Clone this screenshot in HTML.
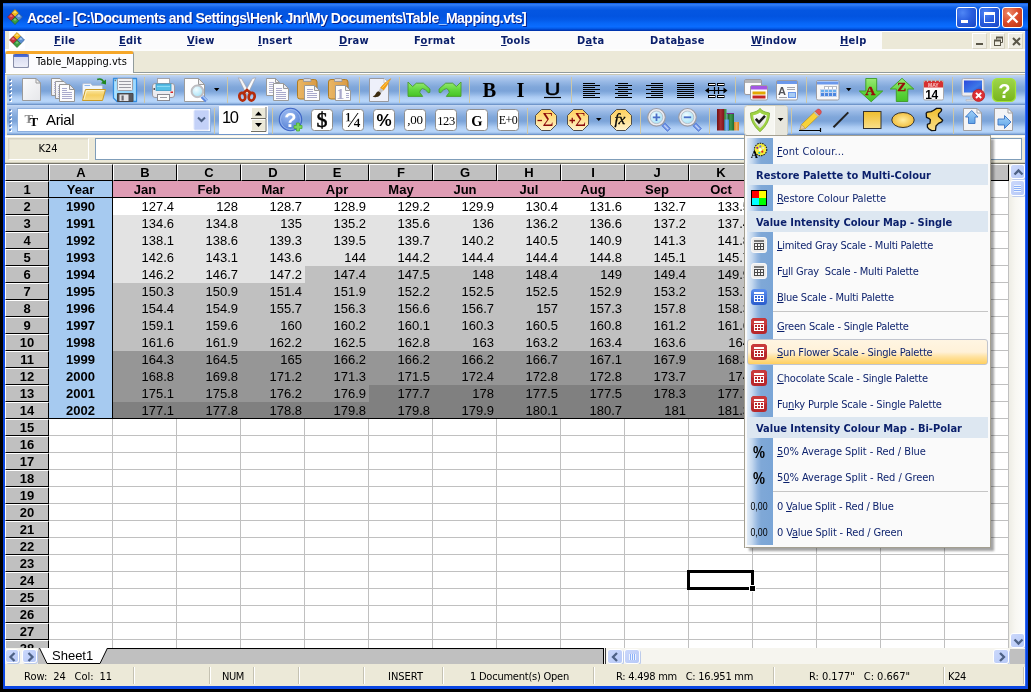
<!DOCTYPE html>
<html><head><meta charset="utf-8"><title>Accel</title>
<style>
html,body{margin:0;padding:0;background:#000;}
body{width:1031px;height:692px;overflow:hidden;}
#scr{will-change:transform;position:relative;width:1031px;height:692px;background:#000;overflow:hidden;font-family:"DejaVu Sans Condensed","Liberation Sans",sans-serif;font-size:11px;color:#000;}
.a{position:absolute;}
.ui{font-family:"DejaVu Sans Condensed","Liberation Sans",sans-serif;font-size:11px;white-space:nowrap;}
.ar{font-family:"Liberation Sans",sans-serif;white-space:nowrap;}
u{text-decoration:underline;text-underline-offset:1px;}
#win{left:3px;top:3px;width:1025px;height:686px;background:#0a46e2;}
#client{left:5px;top:31px;width:1020px;height:655px;background:#ece9d8;}
#title{left:3px;top:3px;width:1025px;height:28px;background:linear-gradient(#0a58e2 0%,#3580f6 6%,#1665ea 14%,#0456e1 26%,#0254e0 48%,#045ae8 60%,#0766f6 72%,#0a6cff 84%,#0660ee 90%,#0040c6 96%,#002e9e 100%);}
#ttext{left:27px;top:10px;font:bold 14px "Liberation Sans",sans-serif;color:#fff;text-shadow:1px 1px 0 #0a1f8a;white-space:nowrap;letter-spacing:-.52px;}
.mi{top:34px;font-weight:bold;color:#0a1f6b;letter-spacing:.25px;}
.cb{top:7px;width:19px;height:19px;border:1px solid #fff;border-radius:3px;background:radial-gradient(circle at 30% 25%,#4f86f5 0%,#2a5fe0 45%,#1a47c4 100%);}
.cx{background:radial-gradient(circle at 30% 25%,#ee8a6a 0%,#d9492a 50%,#b9340f 100%);}
.mb{top:33px;width:15px;height:16px;background:#efede2;border:1px solid #fff;border-right-color:#d8d4c4;border-bottom-color:#d8d4c4;box-sizing:border-box;}
#dtab{left:5px;top:51px;width:129px;height:22px;box-sizing:border-box;background:#fcfcfe;border-top:3px solid #f5a72a;border-right:1px solid #919b9c;border-left:1px solid #919b9c;border-radius:3px 3px 0 0;}
#grid{background:#fff;overflow:hidden;}
.gv{top:0;width:1px;height:484px;background:#c0c0c0;}
.gh{left:0;width:1004px;height:1px;background:#c0c0c0;}
.hd{box-sizing:border-box;background:#c0c0c0;border-top:1px solid #fff;border-left:1px solid #fff;border-right:1px solid #000;border-bottom:1px solid #000;font-size:13px;line-height:16px;text-align:center;font-weight:bold;}
.rh{font-weight:bold;}
.cb1{font-size:13px;font-weight:bold;line-height:17px;height:17px;text-align:center;}
.cn{font-size:13px;line-height:17px;height:17px;text-align:right;}
.sbb{box-sizing:border-box;background:linear-gradient(135deg,#cbd8fb,#b7c9f7);border:1px solid #fff;border-radius:3px;box-shadow:1px 1px 0 rgba(140,168,232,.55);}
.ss{top:667px;width:2px;height:17px;background:linear-gradient(90deg,#c5c2b2 0,#c5c2b2 1px,#fff 1px,#fff 2px);}
#popup{left:745px;top:135px;width:246px;height:413px;box-sizing:border-box;border:1px solid #a39f91;border-left-color:#fafafa;background:#fafafa;overflow:hidden;}
#pshadow{left:749px;top:139px;width:245px;height:412px;background:rgba(0,0,0,.36);filter:blur(1.3px);}
.pstrip{left:1px;width:26px;background:linear-gradient(90deg,#e2edf8 0%,#c3d7ee 20%,#95b7e0 40%,#7fa8d7 54%,#7aa5d6 100%);}
.pit{left:31px;height:26px;line-height:26px;color:#0a1f6b;white-space:pre;}
.phd{left:1px;width:241px;height:21px;background:#dde7f1;}
.phdt{left:10px;height:21px;line-height:21px;font-weight:bold;color:#0a1f6b;white-space:pre;}
.psep{left:27px;width:215px;height:1px;background:#c5c5c5;}
.psel{left:1px;width:241px;height:26px;box-sizing:border-box;border:1px solid #c2c5ce;border-radius:3px;background:linear-gradient(#fff5e2 0%,#fff1d8 50%,#ffe2a0 70%,#ffd060 100%);}
.tb{left:7px;width:1018px;background:linear-gradient(#c7daf5 0%,#b3cbee 7%,#97b8e5 23%,#80a7da 40%,#7ba3d8 53%,#8fb4e4 63%,#aac9f1 73%,#b7d5f9 83%,#b4d3f8 90%,#9fc1eb 93.3%,#85a9da 96.6%,#6d94c9 98.5%,#6d94c9 100%);}
.tb2{}
.grip{width:3px;height:23px;background:
 repeating-linear-gradient(#5f83bd 0,#5f83bd 2px,transparent 2px,transparent 4px);}
.grip2{width:3px;height:23px;background:
 repeating-linear-gradient(transparent 0,transparent 1px,#fff 1px,#fff 3px,transparent 3px,transparent 4px);}
.tsep{width:1px;height:26px;background:#cdc7a6;margin-top:1px;}
.ic{overflow:visible;}

</style></head>
<body>
<div id="scr">
<!-- chrome.html -->
<div class="a" id="win"></div>
<div class="a" id="title"></div>
<svg class="a" style="left:7px;top:9px" width="16" height="16" viewBox="0 0 16 16">
 <polygon points="8,0.5 11.7,4.2 8,7.9 4.3,4.2" fill="#f2b818" stroke="#b07a08" stroke-width=".6"/>
 <polygon points="4.2,4.3 7.9,8 4.2,11.7 0.5,8" fill="#c8303a" stroke="#7c1820" stroke-width=".6"/>
 <polygon points="11.8,4.3 15.5,8 11.8,11.7 8.1,8" fill="#5a8fd0" stroke="#2a5390" stroke-width=".6"/>
 <polygon points="8,8.1 11.7,11.8 8,15.5 4.3,11.8" fill="#3c9c40" stroke="#1c5c20" stroke-width=".6"/>
 <polygon points="8,1.5 10,3.6 8,4.4 6,3.6" fill="#ffe27a" opacity=".8"/>
 <polygon points="4.2,5.4 6,7.2 4.2,8 2.3,7.2" fill="#ef8a90" opacity=".7"/>
 <polygon points="11.8,5.4 13.7,7.2 11.8,8 10,7.2" fill="#b4d2f4" opacity=".8"/>
 <polygon points="8,9.2 9.8,11 8,11.8 6.2,11" fill="#8fd890" opacity=".7"/>
</svg>
<div class="a" id="ttext">Accel - [C:\Documents and Settings\Henk Jnr\My Documents\Table_Mapping.vts]</div>
<!-- caption buttons -->
<div class="a cb" style="left:956px;"><div class="a" style="left:4px;top:12px;width:7px;height:3px;background:#fff"></div></div>
<div class="a cb" style="left:979px;"><div class="a" style="left:4px;top:4px;width:11px;height:11px;border:1px solid #fff;border-top-width:3px;box-sizing:border-box"></div></div>
<div class="a cb cx" style="left:1002px;"><svg class="a" style="left:0;top:0" width="19" height="19" viewBox="0 0 19 19"><path d="M4.5 4.5L14.5 14.5M14.500 4.5L4.5 14.5" stroke="#fff" stroke-width="2.3" stroke-linecap="butt"/></svg></div>
<div class="a" id="client"></div>
<!-- menu bar -->
<div class="a" style="left:9px;top:31px;width:873px;height:20px;background:#fbfbfc"></div>
<div class="a" style="left:9px;top:31px;width:16px;height:19px;background:#fff"></div>
<div class="a" style="left:882px;top:31px;width:143px;height:1px;background:#fff"></div>
<div class="a" style="left:5px;top:49px;width:1020px;height:2px;background:#fdfdfc"></div>
<svg class="a" style="left:9px;top:32px" width="16" height="16" viewBox="0 0 16 16">
 <polygon points="8,0.5 11.7,4.2 8,7.9 4.3,4.2" fill="#f2b818" stroke="#b07a08" stroke-width=".6"/>
 <polygon points="4.2,4.3 7.9,8 4.2,11.7 0.5,8" fill="#c8303a" stroke="#7c1820" stroke-width=".6"/>
 <polygon points="11.8,4.3 15.5,8 11.8,11.7 8.1,8" fill="#5a8fd0" stroke="#2a5390" stroke-width=".6"/>
 <polygon points="8,8.1 11.7,11.8 8,15.5 4.3,11.8" fill="#3c9c40" stroke="#1c5c20" stroke-width=".6"/>
 <polygon points="8,1.5 10,3.6 8,4.4 6,3.6" fill="#ffe27a" opacity=".8"/>
 <polygon points="4.2,5.4 6,7.2 4.2,8 2.3,7.2" fill="#ef8a90" opacity=".7"/>
 <polygon points="11.8,5.4 13.7,7.2 11.8,8 10,7.2" fill="#b4d2f4" opacity=".8"/>
 <polygon points="8,9.2 9.8,11 8,11.8 6.2,11" fill="#8fd890" opacity=".7"/>
</svg>
<div class="a ui mi" style="left:54px"><u>F</u>ile</div>
<div class="a ui mi" style="left:119px"><u>E</u>dit</div>
<div class="a ui mi" style="left:187px"><u>V</u>iew</div>
<div class="a ui mi" style="left:258px"><u>I</u>nsert</div>
<div class="a ui mi" style="left:339px"><u>D</u>raw</div>
<div class="a ui mi" style="left:414px">F<u>o</u>rmat</div>
<div class="a ui mi" style="left:501px"><u>T</u>ools</div>
<div class="a ui mi" style="left:577px">D<u>a</u>ta</div>
<div class="a ui mi" style="left:650px">Data<u>b</u>ase</div>
<div class="a ui mi" style="left:751px"><u>W</u>indow</div>
<div class="a ui mi" style="left:840px"><u>H</u>elp</div>
<!-- mdi buttons -->
<div class="a mb" style="left:972px"><div class="a" style="left:3px;top:9px;width:7px;height:2px;background:#5a5648"></div></div>
<div class="a mb" style="left:990px"><svg class="a" style="left:0;top:0" width="15" height="15" viewBox="0 0 15 15"><path d="M5.5 5.5V3.5H11.5V8.5H9.5" fill="none" stroke="#5a5648" stroke-width="1"/><path d="M5 3.5H12" stroke="#5a5648" stroke-width="2"/><rect x="3.5" y="6.5" width="6" height="5" fill="none" stroke="#5a5648" stroke-width="1"/><path d="M3 6.5H10" stroke="#5a5648" stroke-width="2"/></svg></div>
<div class="a mb" style="left:1008px"><svg class="a" style="left:0;top:0" width="15" height="15" viewBox="0 0 15 15"><path d="M4 4L11 11M11 4L4 11" stroke="#5a5648" stroke-width="2"/></svg></div>
<!-- document tab bar -->
<div class="a" style="left:134px;top:72px;width:891px;height:1px;background:#919b9c"></div>
<div class="a" style="left:5px;top:73px;width:1020px;height:1px;background:#fff"></div>
<div class="a" style="left:5px;top:74px;width:1020px;height:1px;background:#cbc8b3"></div>
<div class="a" id="dtab"></div>
<div class="a" style="left:13px;top:54px;width:16px;height:14px;border-radius:2px;background:linear-gradient(#3c5cc6 0,#5474da 3.3px,#d9ddf1 3.3px,#eff0fa 100%);box-shadow:inset 1px 0 0 rgba(125,132,160,.9),inset -1px 0 0 rgba(125,132,160,.9),inset 0 -1px 0 rgba(125,132,160,.9)"></div>
<div class="a ui" style="left:36px;top:55px;">Table_Mapping.vts</div>
<!-- formula bar -->
<div class="a" style="left:5px;top:135px;width:1020px;height:29px;background:#ece9d8"></div>
<div class="a" style="left:5px;top:135px;width:1020px;height:3px;background:linear-gradient(#f6f3e6 0,#f6f3e6 1px,#fff 1px,#fff 2px,#f4f1e3 2px,#f4f1e3 3px)"></div>
<div class="a" style="left:8px;top:138px;width:81px;height:22px;box-sizing:border-box;border:1px solid #d6d2c2;border-right-color:#fff;border-bottom-color:#fff;box-shadow:inset 1px 1px 0 #e2dfd0;"></div>
<div class="a ui" style="left:8px;top:142px;width:80px;text-align:center">K24</div>
<div class="a" style="left:95px;top:138px;width:927px;height:22px;box-sizing:border-box;border:1px solid #7f9db9;background:#fff"></div>

<div class="a" style="left:5px;top:162px;width:1020px;height:1px;background:#cfccba"></div>
<div class="a" style="left:5px;top:163px;width:1020px;height:1px;background:#77756a"></div>

<!-- toolbar1.html -->
<div class="a tb" style="top:75px;height:30px"></div>
<div class="a tb tb2" style="top:105px;height:30px"></div>
<div class="a grip2" style="left:10px;top:79px;width:2px"></div><div class="a grip" style="left:9px;top:79px;width:2px"></div>
<div class="a grip2" style="left:10px;top:109px;width:2px"></div><div class="a grip" style="left:9px;top:109px;width:2px"></div>
<div class="a tsep" style="left:144px;top:76px"></div><div class="a tsep" style="left:227px;top:76px"></div><div class="a tsep" style="left:359px;top:76px"></div><div class="a tsep" style="left:399px;top:76px"></div><div class="a tsep" style="left:469px;top:76px"></div><div class="a tsep" style="left:571px;top:76px"></div><div class="a tsep" style="left:735px;top:76px"></div><div class="a tsep" style="left:806px;top:76px"></div><div class="a tsep" style="left:952px;top:76px"></div><div class="a tsep" style="left:214px;top:107px;height:26px"></div><div class="a tsep" style="left:272px;top:107px;height:26px"></div><div class="a tsep" style="left:527px;top:107px;height:26px"></div><div class="a tsep" style="left:640px;top:107px;height:26px"></div><div class="a tsep" style="left:709px;top:107px;height:26px"></div><div class="a tsep" style="left:791px;top:107px;height:26px"></div><div class="a tsep" style="left:953px;top:107px;height:26px"></div>

<!-- toolbar2.html -->
<svg class="a" style="left:0;top:74px" width="1031" height="62" viewBox="0 74 1031 62">
<defs>
<linearGradient id="gPaper" x1="0" y1="0" x2="1" y2="1"><stop offset="0" stop-color="#fbfbfc"/><stop offset="1" stop-color="#e6e7ea"/></linearGradient>
<linearGradient id="gFold" x1="0" y1="0" x2="0" y2="1"><stop offset="0" stop-color="#fbe9a8"/><stop offset=".5" stop-color="#f5cf62"/><stop offset="1" stop-color="#f9dc86"/></linearGradient>
<linearGradient id="gGreen" x1="0" y1="0" x2="0" y2="1"><stop offset="0" stop-color="#9aea74"/><stop offset=".55" stop-color="#5fd63e"/><stop offset="1" stop-color="#46c426"/></linearGradient>
<linearGradient id="gClip" x1="0" y1="0" x2="1" y2="0"><stop offset="0" stop-color="#eab766"/><stop offset="1" stop-color="#d99a45"/></linearGradient>
<linearGradient id="gOct" x1="0" y1="0" x2="0" y2="1"><stop offset="0" stop-color="#ffcf5c"/><stop offset=".45" stop-color="#ffe08c"/><stop offset="1" stop-color="#fff3cf"/></linearGradient>
<linearGradient id="gSq" x1="0" y1="0" x2="0" y2="1"><stop offset="0" stop-color="#efbe2e"/><stop offset="1" stop-color="#f9df8a"/></linearGradient>
<radialGradient id="gEl" cx=".5" cy=".5" r=".6"><stop offset="0" stop-color="#ffeea0"/><stop offset="1" stop-color="#efb52c"/></radialGradient>
<radialGradient id="gLens" cx=".4" cy=".35" r=".7"><stop offset="0" stop-color="#f2fcff"/><stop offset="1" stop-color="#a4e2f8"/></radialGradient>
<radialGradient id="gHelp" cx=".4" cy=".3" r=".85"><stop offset="0" stop-color="#9bbaf2"/><stop offset=".6" stop-color="#6890dc"/><stop offset="1" stop-color="#4a74cc"/></radialGradient>
<linearGradient id="gHelpG" x1="0" y1="0" x2="0" y2="1"><stop offset="0" stop-color="#9ed64c"/><stop offset="1" stop-color="#78b41c"/></linearGradient>
<linearGradient id="gMon" x1="0" y1="0" x2="1" y2="1"><stop offset="0" stop-color="#2c49dc"/><stop offset=".6" stop-color="#3d78e8"/><stop offset="1" stop-color="#2040c8"/></linearGradient>
<linearGradient id="gShield" x1="0" y1="0" x2="0" y2="1"><stop offset="0" stop-color="#ffffff"/><stop offset="1" stop-color="#dcdcdc"/></linearGradient>
<linearGradient id="gBlueArr" x1="0" y1="0" x2="0" y2="1"><stop offset="0" stop-color="#9fd0f8"/><stop offset="1" stop-color="#5fa2e6"/></linearGradient>
<linearGradient id="gSave" x1="0" y1="0" x2="1" y2="0"><stop offset="0" stop-color="#c4ecff"/><stop offset=".15" stop-color="#9adcff"/><stop offset=".85" stop-color="#8ed2fd"/><stop offset="1" stop-color="#b8e6ff"/></linearGradient>
<linearGradient id="gRedBar" x1="0" y1="0" x2="1" y2="0"><stop offset="0" stop-color="#701014"/><stop offset=".5" stop-color="#a62c32"/><stop offset="1" stop-color="#7c1418"/></linearGradient>
<linearGradient id="gGrnBar" x1="0" y1="0" x2="1" y2="0"><stop offset="0" stop-color="#1c5c28"/><stop offset=".5" stop-color="#3f9850"/><stop offset="1" stop-color="#1f6a2e"/></linearGradient>
<linearGradient id="gBluBar" x1="0" y1="0" x2="1" y2="0"><stop offset="0" stop-color="#3a7ed0"/><stop offset=".5" stop-color="#7ab4ec"/><stop offset="1" stop-color="#3a7ed0"/></linearGradient>
<linearGradient id="gOrgBar" x1="0" y1="0" x2="1" y2="0"><stop offset="0" stop-color="#d8822a"/><stop offset=".5" stop-color="#f0ac5a"/><stop offset="1" stop-color="#d8822a"/></linearGradient>
</defs>
<!-- new -->
<path d="M22.5 78.5H36L40.5 83V100.5H22.5Z" fill="url(#gPaper)" stroke="#9a9a9a"/>
<path d="M36 78.5V83H40.5Z" fill="#f4f4f6" stroke="#9a9a9a" stroke-linejoin="round"/>
<!-- multi docs -->
<path d="M51.500 78.500H60L62.500 81V95.500H51.500Z" fill="url(#gPaper)" stroke="#959595"/>
<path d="M55.500 81.500H64L66.500 84V98.500H55.500Z" fill="url(#gPaper)" stroke="#959595"/>
<path d="M54 82.500h1.500M54 84.500h1.500M54 86.500h1.500M54 88.500h1.500M54 90.500h1.500M54 92.500h1.500M58 86.500h1.500M58 88.500h1.500M58 90.500h1.500M58 92.500h1.500M58 94.500h1.500M58 96.500h1.500" stroke="#b4b4d8" stroke-width="1"/>
<path d="M59.500 84.500H69.500L74.500 89.500V101.500H59.500Z" fill="#fcfcfd" stroke="#959595"/>
<path d="M69.500 84.500V89.500H74.500Z" fill="#ececf0" stroke="#959595" stroke-linejoin="round"/>
<path d="M62 88.500h5M62 90.500h5M62 92.500h10M62 94.500h10M62 96.500h10M62 98.500h10" stroke="#a9a9cc" stroke-width="1"/>
<!-- open folder -->
<path d="M82.500 98V84.800Q82.500 83.500 84 83.500H90.500L92.500 85.500H101.500Q102.500 85.500 102.500 87V92" fill="#f0f5fc" stroke="#b4c0d6"/>
<path d="M84.500 85.500H90" stroke="#8ab4ee" stroke-width="1"/>
<path d="M82.500 100.500L85.500 89.500H105.500L102.500 100.500Z" fill="url(#gFold)" stroke="#c89a28" stroke-linejoin="round"/>
<path d="M84 99.500L86.500 90.500H104" fill="none" stroke="#fdf2c4" stroke-width="1"/>
<path d="M97.200 79.500Q101.500 77.800 103.800 82" fill="none" stroke="#1e861e" stroke-width="1.600"/>
<path d="M100.800 83.200L106 79.500V84.500Z" fill="#1e861e"/>
<!-- save -->
<path d="M113.500 78.500H136.500V101.500H117L113.500 98Z" fill="url(#gSave)" stroke="#348ce0" stroke-width="1.300" stroke-linejoin="round"/>
<rect x="114.700" y="79.700" width="1" height="1.500" fill="#3a4a5a"/>
<rect x="117.500" y="78.500" width="15" height="12" rx="1" fill="#f2f2f4" stroke="#a0a0a8"/>
<path d="M119 81.500h12M119 84.500h12M119 87.500h12" stroke="#9a9aa2" stroke-width="1.100"/>
<path d="M117.500 93.500H133V101.500H117.500Z" fill="#58585c" stroke="#48484c"/>
<rect x="119.500" y="94.500" width="9" height="6.500" fill="#e4e4e8"/>
<rect x="121.500" y="95.500" width="2.200" height="5" fill="#6a6a70"/>
<!-- print -->
<rect x="157.500" y="78.500" width="12" height="7" fill="#fcfcfc" stroke="#a4a4aa"/>
<rect x="152.500" y="83.500" width="22" height="14" rx="2.500" fill="#ebebf0" stroke="#9a9aa2"/>
<rect x="156" y="84" width="15" height="6.500" fill="#56bfe6" stroke="#3a9ac8" stroke-width=".8"/>
<path d="M157 86.500h13" stroke="#8ad8f4" stroke-width="1"/>
<rect x="170.500" y="91.500" width="2.500" height="1.500" fill="#d82020"/>
<rect x="153.500" y="88" width="1.500" height="2" fill="#55555a"/>
<rect x="157.500" y="94.500" width="12" height="6" fill="#fbfbfb" stroke="#8a8a92"/>
<path d="M160 97.500h7" stroke="#9a9aa2" stroke-width="1"/>
<!-- preview -->
<path d="M184.500 78.500H198.500L204.500 84.500V101.500H184.500Z" fill="#fdfdfe" stroke="#9c9c9c"/>
<path d="M198.500 78.500V84.500H204.500Z" fill="#ececf0" stroke="#9c9c9c" stroke-linejoin="round"/>
<path d="M202 96.500L206.500 101" stroke="#5a86dc" stroke-width="3.800" stroke-linecap="butt"/>
<path d="M202.300 95.800L207 100.500" stroke="#a4c4f6" stroke-width="1.300"/>
<circle cx="197.400" cy="91.300" r="5.600" fill="url(#gLens)" stroke="#c2c2c6" stroke-width="1.700"/>
<circle cx="197.400" cy="91.300" r="6.400" fill="none" stroke="#a4a4aa" stroke-width=".5"/>
<path d="M214 88H219.400L216.700 91.200Z" fill="#000"/>
<!-- cut -->
<path d="M238.300 77.800L241.600 78.600L249.200 92.300L246.200 94Z" fill="#f4f4f6" stroke="#a2a2aa" stroke-width=".7"/>
<path d="M255.700 77.800L252.400 78.600L244.800 92.300L247.800 94Z" fill="#fcfcfd" stroke="#a2a2aa" stroke-width=".7"/>
<ellipse cx="242.300" cy="96.700" rx="2.900" ry="3.900" fill="none" stroke="#b52c0a" stroke-width="2.700" transform="rotate(-12 242.300 96.700)"/>
<ellipse cx="251.700" cy="96.700" rx="2.900" ry="3.900" fill="none" stroke="#b52c0a" stroke-width="2.700" transform="rotate(12 251.700 96.700)"/>
<path d="M243.500 93L247 90L250.500 93" fill="none" stroke="#b52c0a" stroke-width="2.600"/>
<!-- copy -->
<path d="M266.500 78.500H275.500L279.500 82.500V95.500H266.500Z" fill="#fcfcfd" stroke="#9a9a9a"/>
<path d="M275.500 78.500V82.500H279.500Z" fill="#ececf0" stroke="#9a9a9a" stroke-linejoin="round"/>
<path d="M269 82.500h5M269 84.500h5M269 86.500h4M269 88.500h4M269 90.500h4M269 92.500h4" stroke="#b4b4d2"/>
<path d="M273.500 83.500H283.500L288.500 88.500V100.500H273.500Z" fill="#fcfcfd" stroke="#9a9a9a"/>
<path d="M283.500 83.500V88.500H288.500Z" fill="#ececf0" stroke="#9a9a9a" stroke-linejoin="round"/>
<path d="M276 88.500h6M276 90.500h6M276 92.500h10M276 94.500h10M276 96.500h10M276 98.500h10" stroke="#a9a9cc"/>
<!-- paste -->
<rect x="297.500" y="79.500" width="19.500" height="19.500" rx="2.500" fill="url(#gClip)" stroke="#b07c22"/>
<path d="M303.500 81.500V79.500Q303.500 78.500 305 78.500H309.500Q311 78.500 311 79.500V81.500Z" fill="#d8d8dc" stroke="#909098" stroke-width=".8"/>
<path d="M304.500 85.500H314.500L319.500 90.500V100.500H304.500Z" fill="#fcfcfd" stroke="#9a9a9a"/>
<path d="M314.500 85.500V90.500H319.500Z" fill="#ececf0" stroke="#9a9a9a" stroke-linejoin="round"/>
<path d="M307 89.500h6M307 91.500h6M307 93.500h10M307 95.500h10M307 97.500h10" stroke="#a9a9cc"/>
<!-- paste special -->
<rect x="328.500" y="79.500" width="19.500" height="19.500" rx="2.500" fill="url(#gClip)" stroke="#b07c22"/>
<path d="M334.500 81.500V79.500Q334.500 78.500 336 78.500H340.500Q342 78.500 342 79.500V81.500Z" fill="#d8d8dc" stroke="#909098" stroke-width=".8"/>
<path d="M335.500 85.500H345.500L350.500 90.500V100.500H335.500Z" fill="#fcfcfd" stroke="#9a9a9a"/>
<path d="M345.500 85.500V90.500H350.500Z" fill="#ececf0" stroke="#9a9a9a" stroke-linejoin="round"/>
<path d="M346 93.500h3M346 95.500h3M346 97.500h3" stroke="#a9a9cc"/>
<text x="336.500" y="99" font-family="Liberation Serif,serif" font-weight="bold" font-size="15.500" fill="#a8a8cc">1</text>
<!-- paint brush doc -->
<path d="M369.500 78.500H384L388.500 83V101.500H369.500Z" fill="#eef0fa" stroke="#9a9a9e"/>
<path d="M384 78.500V83H388.500" fill="#fafbfe" stroke="#b4b4ba" stroke-width=".7"/>
<path d="M390.900 78.600Q388.500 82.500 387 85.500L383.600 90.300L380.200 88.100Q383 84.500 385.500 82.500Q388.500 80 390.900 78.600Z" fill="#f5a010" stroke="#e08c08" stroke-width=".4"/>
<path d="M388 81.500L382.500 87.500" stroke="#fbc860" stroke-width="1" stroke-linecap="round"/>
<path d="M380.200 88.100L383.600 90.300L381 92.900L378.500 91.200Z" fill="#c4c4c8"/>
<path d="M378.500 91.200L381 92.900Q380.300 96.500 376.200 97.100Q374 97.300 372.700 96.600Q375.300 95.500 375.900 93.500Q376.700 91.400 378.500 91.200Z" fill="#3c2c12"/>
<!-- undo -->
<path d="M408 82L412.600 86.600L416.300 83.200H423.400L429.900 89V92.300L428.200 92.800Q425.500 88.600 422.400 88.600Q419.900 89.500 419.700 92.300L422.700 96.400H408Z" fill="url(#gGreen)" stroke="#4a9c2e" stroke-width=".9" stroke-linejoin="round"/>
<!-- redo -->
<path d="M461 82L456.400 86.600L452.700 83.200H445.600L439.100 89V92.300L440.800 92.800Q443.500 88.600 446.600 88.600Q449.100 89.500 449.300 92.300L446.300 96.400H461Z" fill="url(#gGreen)" stroke="#4a9c2e" stroke-width=".9" stroke-linejoin="round"/>
<!-- B I U -->
<text x="482.500" y="97" font-family="Liberation Serif,serif" font-weight="bold" font-size="20.500" fill="#000">B</text>
<text x="516.500" y="97" font-family="Liberation Serif,serif" font-weight="bold" font-size="20.500" fill="#000">I</text>
<text transform="translate(544.400 95) scale(1.36 1)" x="0" y="0" font-family="Liberation Sans,sans-serif" font-size="16.300" fill="#000" stroke="#000" stroke-width=".4">U</text>
<path d="M544 97.500H561" stroke="#000" stroke-width="1.200"/>
<!-- aligns -->
<path d="M583 83.500h12M583 85.500h17M583 87.500h12M583 89.500h17M583 91.500h12M583 93.500h17M583 95.500h12M583 97.500h17" stroke="#000"/>
<path d="M618 83.500h10M615 85.500h17M618 87.500h10M615 89.500h17M618 91.500h10M615 93.500h17M618 95.500h10M615 97.500h17" stroke="#000"/>
<path d="M651 83.500h12M646 85.500h17M651 87.500h12M646 89.500h17M651 91.500h12M646 93.500h17M651 95.500h12M646 97.500h17" stroke="#000"/>
<path d="M677 83.500h17M677 85.500h17M677 87.500h17M677 89.500h17M677 91.500h17M677 93.500h17M677 95.500h17M677 97.500h17" stroke="#000"/>
<!-- width -->
<rect x="708.500" y="83.500" width="6.500" height="2" fill="#fff" stroke="#000" stroke-width="1"/><rect x="717.500" y="83.500" width="6.500" height="2" fill="#fff" stroke="#000" stroke-width="1"/>
<rect x="708.500" y="95.500" width="6.500" height="2" fill="#fff" stroke="#000" stroke-width="1"/><rect x="717.500" y="95.500" width="6.500" height="2" fill="#fff" stroke="#000" stroke-width="1"/>
<path d="M706 90.500H726M714.500 87V94M718.500 87V94" stroke="#000" stroke-width="1.200"/>
<path d="M705 90.500L709 87.500V93.500ZM727.500 90.500L723.500 87.500V93.500Z" fill="#000"/>
<!-- windows -->
<rect x="744.500" y="79.500" width="17" height="15" rx="1.500" fill="#fbfbfc" stroke="#9c9ca2"/>
<path d="M745 80H761V83H745Z" fill="#b4b4b8"/>
<rect x="750.500" y="85.500" width="17" height="14.500" rx="1.500" fill="#fbfbfc" stroke="#9c9ca2"/>
<path d="M751 86H767V89.500H751Z" fill="#a456e4"/>
<rect x="752.500" y="91.500" width="13" height="3" fill="#e2a800"/>
<rect x="752.500" y="95.500" width="13" height="3" fill="#c42424"/>
<!-- A form -->
<rect x="776.500" y="80.500" width="21" height="19.500" rx="1.500" fill="#fbfbfc" stroke="#9c9ca2"/>
<path d="M777 81H797V84H777Z" fill="#6b98ec"/>
<text x="778" y="95" font-family="Liberation Sans,sans-serif" font-weight="bold" font-size="11" fill="#55555a">A</text>
<path d="M787 87.500h8M787 89.500h8M779 97.500h8" stroke="#a4a4aa"/>
<rect x="788.500" y="92.500" width="7" height="5" fill="#a8ccf4" stroke="#6b98ec"/>
<!-- table -->
<rect x="816.500" y="80.500" width="22.500" height="19.500" rx="1.500" fill="#f7f7f8" stroke="#9c9ca2"/>
<path d="M817 81H838.500V84.500H817Z" fill="#6b98ec"/>
<path d="M817 81.500H838.500" stroke="#a8c6f8"/>
<rect x="824" y="86" width="13" height="4" fill="#b4b8c4"/><rect x="820" y="89" width="17" height="8" fill="#c4d4ee"/>
<g fill="#fff"><rect x="825" y="87" width="3" height="2"/><rect x="829" y="87" width="3" height="2"/><rect x="833" y="87" width="3" height="2"/></g>
<g fill="#66aef0"><rect x="821" y="90" width="3" height="2"/><rect x="825" y="90" width="3" height="2"/><rect x="829" y="90" width="3" height="2"/><rect x="833" y="90" width="3" height="2"/></g>
<g fill="#4b86e0"><rect x="821" y="93" width="3" height="3"/><rect x="825" y="93" width="3" height="3"/><rect x="829" y="93" width="3" height="3"/><rect x="833" y="93" width="3" height="3"/></g>
<path d="M846 88H851.400L848.700 91.200Z" fill="#000"/>
<!-- sort A -->
<path d="M865.800 78.500H876.700V91H882.700L871.200 101.800L859.300 91H865.800Z" fill="url(#gGreen)" stroke="#3c9a24" stroke-width=".9" stroke-linejoin="round"/>
<text transform="translate(865.200 95.200) scale(1.12 1)" font-family="Liberation Serif,serif" font-weight="bold" font-size="12.500" fill="#980a0a" stroke="#980a0a" stroke-width=".35">A</text>
<!-- sort Z -->
<path d="M902 78.300L913.800 89H907.800V101.500H896.300V89H890.300Z" fill="url(#gGreen)" stroke="#3c9a24" stroke-width=".9" stroke-linejoin="round"/>
<text transform="translate(897.200 91.200) scale(1.15 1)" font-family="Liberation Serif,serif" font-weight="bold" font-size="11.500" fill="#980a0a" stroke="#980a0a" stroke-width=".35">Z</text>
<!-- calendar -->
<rect x="923.500" y="80.500" width="20" height="19.500" rx="1.500" fill="#fcfcfc" stroke="#a8a8ac"/>
<path d="M924 82.500Q924 81 925.500 81H941.500Q943 81 943 82.500V87.500H924Z" fill="#d63030"/>
<path d="M927.500 78.500V82M931.500 78.500V82M935.500 78.500V82M939.500 78.500V82" stroke="#c0c0c4" stroke-width="1.200"/>
<text x="928" y="87" font-family="Liberation Sans,sans-serif" font-weight="bold" font-size="5" fill="#f8c8c8">MAY</text>
<text x="925.200" y="98.500" font-family="Liberation Sans,sans-serif" font-weight="bold" font-size="12" fill="#000" letter-spacing="-.4">14</text>
<!-- monitor -->
<rect x="962" y="78.500" width="22" height="17.500" rx="1.500" fill="#ececf0" stroke="#b0b0b6"/>
<rect x="964" y="80.500" width="18" height="12" fill="url(#gMon)"/>
<path d="M970 96H976V99H970Z" fill="#c4c4ca"/>
<path d="M966 99.500H980V101H966Z" fill="#e4e4e8" stroke="#b0b0b6" stroke-width=".6"/>
<circle cx="978.600" cy="95.400" r="6" fill="#dc3034" stroke="#b81c20" stroke-width=".8"/>
<path d="M976 92.800L981.200 98M981.200 92.800L976 98" stroke="#fff" stroke-width="1.900"/>
<!-- help green -->
<rect x="992.500" y="78.500" width="23" height="23" rx="5" fill="url(#gHelpG)" stroke="#a6e43a" stroke-width="1.200"/>
<text x="998.300" y="97.500" font-family="Liberation Sans,sans-serif" font-weight="bold" font-size="20" fill="#fff">?</text>
<!-- font combo -->
<rect x="17.500" y="108.500" width="193" height="23" fill="#fff" stroke="#8fb0dd"/>
<text x="24.500" y="123" font-family="Liberation Serif,serif" font-weight="bold" font-size="13" fill="#8c8c8c">T</text>
<text x="29.500" y="125.800" font-family="Liberation Serif,serif" font-weight="bold" font-size="13" fill="#000">T</text>
<text x="46" y="125" font-family="Liberation Sans,sans-serif" font-size="15" fill="#000" letter-spacing="-.35">Arial</text>
<rect x="194" y="110" width="15" height="20" rx="1.500" fill="#c3d1f8" stroke="#dfe7fc" stroke-width="1"/>
<path d="M198 117.500L201.500 121L205 117.500" fill="none" stroke="#4d6185" stroke-width="2"/>
<!-- size -->
<rect x="219" y="106" width="49" height="28" fill="#fff"/>
<text x="222" y="123" font-family="Liberation Sans,sans-serif" font-size="16.500" fill="#000" letter-spacing="-1.400">10</text>
<rect x="251.500" y="107.500" width="14" height="11" fill="#ece9d8" stroke="#fff"/><path d="M251 118.500H266V107" fill="none" stroke="#716f64"/>
<rect x="251.500" y="119.500" width="14" height="11.500" fill="#ece9d8" stroke="#fff"/><path d="M251 131.500H266V119" fill="none" stroke="#716f64"/>
<path d="M255 115.500H262L258.500 111.500Z" fill="#000"/>
<path d="M255 123H262L258.500 127Z" fill="#000"/>
<!-- help blue -->
<circle cx="290.500" cy="119.500" r="11.200" fill="url(#gHelp)" stroke="#3f66c6" stroke-width="1.100"/>
<circle cx="290.500" cy="119.500" r="10" fill="none" stroke="#b4ccf8" stroke-width=".8" opacity=".75"/>
<text x="284.300" y="127" font-family="Liberation Sans,sans-serif" font-weight="bold" font-size="20" fill="#fff">?</text>
<path d="M296.500 123V125.500H294V128.500H296.500V131H299.500V128.500H302V125.500H299.500V123Z" fill="#7ad45e" stroke="#4cae30" stroke-width=".8"/>
<!-- number format buttons -->
<g fill="#fff" stroke="#8e8e8e">
<rect x="311.500" y="109.500" width="21" height="21" rx="3"/>
<rect x="342.500" y="109.500" width="21" height="21" rx="3"/>
<rect x="373.500" y="109.500" width="21" height="21" rx="3"/>
<rect x="404.500" y="109.500" width="21" height="21" rx="3"/>
<rect x="435.500" y="109.500" width="21" height="21" rx="3"/>
<rect x="466.500" y="109.500" width="21" height="21" rx="3"/>
<rect x="497.500" y="109.500" width="21" height="21" rx="3"/>
</g>
<text x="322" y="127" text-anchor="middle" font-family="Liberation Serif,serif" font-size="22" fill="#000" stroke="#000" stroke-width=".5">$</text>
<text x="353" y="126.500" text-anchor="middle" font-family="Liberation Serif,serif" font-size="21" fill="#000">¼</text>
<text x="384" y="126" text-anchor="middle" font-family="Liberation Sans,sans-serif" font-weight="bold" font-size="17" fill="#000">%</text>
<text x="415" y="124" text-anchor="middle" font-family="Liberation Serif,serif" font-size="13" fill="#000" letter-spacing="-.3">,00</text>
<text x="446" y="124.500" text-anchor="middle" font-family="Liberation Serif,serif" font-size="12.500" fill="#000" letter-spacing="-.4">123</text>
<text x="477" y="125.500" text-anchor="middle" font-family="Liberation Serif,serif" font-weight="bold" font-size="14.500" fill="#000">G</text>
<text x="508" y="124" text-anchor="middle" font-family="Liberation Serif,serif" font-size="12" fill="#000" letter-spacing="-.6">E+0</text>
<!-- octagons -->
<g fill="url(#gOct)" stroke="#4e4e4e" stroke-width="1">
<path d="M541.500 109.500H550.500L556.500 115.500V124.500L550.500 130.500H541.500L535.500 124.500V115.500Z"/>
<path d="M573.500 109.500H582.500L588.500 115.500V124.500L582.500 130.500H573.500L567.500 124.500V115.500Z"/>
<path d="M616.500 109.500H625.500L631.500 115.500V124.500L625.500 130.500H616.500L610.500 124.500V115.500Z"/>
</g>
<text x="542.500" y="126" font-family="Liberation Serif,serif" font-size="19" fill="#8b0a0a">Σ</text>
<path d="M537.500 120.500H542" stroke="#8b0a0a" stroke-width="1.300"/>
<text x="575" y="126" font-family="Liberation Serif,serif" font-size="19" fill="#8b0a0a">Σ</text>
<path d="M569.500 120.500H575M572.250 117.800V123.200" stroke="#8b0a0a" stroke-width="1.300"/>
<path d="M596 118H601.500L598.750 121Z" fill="#000"/>
<text x="614.500" y="124" font-family="Liberation Serif,serif" font-style="italic" font-size="15.500" fill="#000" stroke="#000" stroke-width=".35" letter-spacing="-.3">fx</text>
<!-- zoom in/out -->
<path d="M661.800 125.800L664.800 122.800L670.500 128.500L667.500 131.500Z" fill="#6c90e4" stroke="#5276d0" stroke-width=".7"/>
<path d="M664.300 125.300L668.300 129.300" stroke="#bfd1f8" stroke-width="1.500"/>
<circle cx="656.500" cy="117.300" r="8.800" fill="#ececf0" stroke="#9a9aa2" stroke-width="1.100"/>
<circle cx="656.500" cy="117.300" r="6.300" fill="url(#gLens)" stroke="#b4bcc6" stroke-width=".9"/>
<path d="M652.800 117.300H660.200M656.500 113.600V121" stroke="#4a70c8" stroke-width="1.800"/>
<path d="M692.800 125.800L695.800 122.800L701.500 128.500L698.500 131.500Z" fill="#6c90e4" stroke="#5276d0" stroke-width=".7"/>
<path d="M695.300 125.300L699.300 129.300" stroke="#bfd1f8" stroke-width="1.500"/>
<circle cx="687.500" cy="117.300" r="8.800" fill="#ececf0" stroke="#9a9aa2" stroke-width="1.100"/>
<circle cx="687.500" cy="117.300" r="6.300" fill="url(#gLens)" stroke="#b4bcc6" stroke-width=".9"/>
<path d="M683.800 117.300H691.200" stroke="#4a70c8" stroke-width="1.800"/>
<!-- chart -->
<rect x="724" y="109" width="2.500" height="21.500" fill="#3c9a48"/>
<rect x="717" y="109" width="7.300" height="21.500" fill="url(#gRedBar)"/>
<rect x="727.500" y="113.500" width="6.500" height="17" fill="url(#gGrnBar)"/>
<rect x="726.500" y="113" width="7.500" height="1" fill="#7a2a8a"/>
<rect x="724.500" y="119.500" width="4.500" height="11" fill="url(#gBluBar)"/>
<rect x="734" y="122" width="5" height="8.500" fill="url(#gOrgBar)"/>
<!-- shield button -->
<rect x="744.500" y="105.500" width="43" height="30" rx="3" fill="#f6f6f1" stroke="#d2cfbd"/>
<path d="M774 106H784.500Q787 106 787 108.500V135H774Z" fill="#e7e6dd"/>
<path d="M774.500 106V135" stroke="#fbfbf8"/>
<path d="M760 108.300Q761.500 111.500 769.500 113Q770 123 760 131.800Q750 123 750.500 113Q758.500 111.500 760 108.300Z" fill="#9fd344" stroke="#79aa2e" stroke-width=".8"/>
<path d="M760 112.500Q761.500 114.300 766.800 115.300Q766.800 122.500 760 128.300Q753.200 122.500 753.200 115.300Q758.500 114.300 760 112.500Z" fill="url(#gShield)"/>
<path d="M755.800 118.800L759 122.300L765 115.800" fill="none" stroke="#1a1a1a" stroke-width="2.500"/>
<path d="M777.700 118H783.500L780.600 121.200Z" fill="#000"/>
<!-- pencil -->
<path d="M799 130.500H821M820.500 128V132" stroke="#000" stroke-width="1.200"/>
<path d="M800 129.500L801.500 124.500L815.500 111L819.500 115L805.500 128.500Z" fill="#f8d238" stroke="#b8901c" stroke-width=".7"/>
<path d="M800 129.500L801.500 124.500L805.500 128.500Z" fill="#e8c89c" stroke="#a88c5c" stroke-width=".5"/>
<path d="M813.800 112.700L817.800 116.700L819.300 115.200L815.300 111.200Z" fill="#b8b8bc"/>
<path d="M815.300 111.200L817.300 109.400Q819 108.400 820.500 110Q822 111.700 821 113.300L819.300 115.200Z" fill="#e45454" stroke="#b83030" stroke-width=".5"/>
<!-- line -->
<path d="M833.500 127.200L848.300 112.400" stroke="#222" stroke-width="2"/>
<!-- square -->
<rect x="863.500" y="111.500" width="17.500" height="17" fill="url(#gSq)" stroke="#333"/>
<!-- ellipse -->
<ellipse cx="903" cy="120" rx="11.200" ry="7.500" fill="url(#gEl)" stroke="#333"/>
<!-- blob -->
<path d="M936.600 108.400H940.800L941.700 109.800L941 111.400L938.500 113.900V116.300L942.700 120.200L941.700 121.800L938.500 123.400L936 126L935.500 130.400L931.600 130.600L928.600 128.700L927.400 127.100V124.300L929.900 123.400L930.400 119.700L928.800 118.300L926.500 117.400L926.200 113.200L927.400 112.100L931.100 111.600L933.400 110.500Z" fill="url(#gSq)" stroke="#111" stroke-width="1.300" stroke-linejoin="round"/>
<!-- doc up -->
<path d="M963.500 108.500H977L981.500 113V130.500H963.500Z" fill="#f4f4f6" stroke="#a0a0a4"/>
<path d="M977 108.500V113H981.500Z" fill="#fff" stroke="#a0a0a4" stroke-linejoin="round"/>
<path d="M971.700 110.500L978 117H975V123.500H968.500V117H965.500Z" fill="url(#gBlueArr)" stroke="#3a74c4" stroke-width=".9" stroke-linejoin="round"/>
<!-- doc right -->
<path d="M994.500 108.500H1008L1012.500 113V130.500H994.500Z" fill="#f4f4f6" stroke="#a0a0a4"/>
<path d="M1008 108.500V113H1012.500Z" fill="#fff" stroke="#a0a0a4" stroke-linejoin="round"/>
<path d="M1011 122L1004.500 115.500V119H998V125H1004.500V128.500Z" fill="url(#gBlueArr)" stroke="#3a74c4" stroke-width=".9" stroke-linejoin="round"/>
</svg>

<!-- grid.html -->
<div class="a" id="grid" style="left:5px;top:164px;width:1004px;height:484px">
<div class="a gv" style="left:107px"></div>
<div class="a gv" style="left:171px"></div>
<div class="a gv" style="left:235px"></div>
<div class="a gv" style="left:299px"></div>
<div class="a gv" style="left:363px"></div>
<div class="a gv" style="left:427px"></div>
<div class="a gv" style="left:491px"></div>
<div class="a gv" style="left:555px"></div>
<div class="a gv" style="left:619px"></div>
<div class="a gv" style="left:683px"></div>
<div class="a gv" style="left:747px"></div>
<div class="a gv" style="left:811px"></div>
<div class="a gv" style="left:875px"></div>
<div class="a gv" style="left:939px"></div>
<div class="a gv" style="left:1003px"></div>
<div class="a gh" style="top:33px"></div>
<div class="a gh" style="top:50px"></div>
<div class="a gh" style="top:67px"></div>
<div class="a gh" style="top:84px"></div>
<div class="a gh" style="top:101px"></div>
<div class="a gh" style="top:118px"></div>
<div class="a gh" style="top:135px"></div>
<div class="a gh" style="top:152px"></div>
<div class="a gh" style="top:169px"></div>
<div class="a gh" style="top:186px"></div>
<div class="a gh" style="top:203px"></div>
<div class="a gh" style="top:220px"></div>
<div class="a gh" style="top:237px"></div>
<div class="a gh" style="top:254px"></div>
<div class="a gh" style="top:271px"></div>
<div class="a gh" style="top:288px"></div>
<div class="a gh" style="top:305px"></div>
<div class="a gh" style="top:322px"></div>
<div class="a gh" style="top:339px"></div>
<div class="a gh" style="top:356px"></div>
<div class="a gh" style="top:373px"></div>
<div class="a gh" style="top:390px"></div>
<div class="a gh" style="top:407px"></div>
<div class="a gh" style="top:424px"></div>
<div class="a gh" style="top:441px"></div>
<div class="a gh" style="top:458px"></div>
<div class="a gh" style="top:475px"></div>
<div class="a" style="left:44px;top:17px;width:63px;height:238px;background:#a6caf0"></div>
<div class="a" style="left:108px;top:17px;width:639px;height:16px;background:#df9cb4"></div>
<div class="a ar cb1" style="left:44px;top:17px;width:63px">Year</div>
<div class="a ar cb1" style="left:108px;top:17px;width:64px">Jan</div>
<div class="a ar cb1" style="left:172px;top:17px;width:64px">Feb</div>
<div class="a ar cb1" style="left:236px;top:17px;width:64px">Mar</div>
<div class="a ar cb1" style="left:300px;top:17px;width:64px">Apr</div>
<div class="a ar cb1" style="left:364px;top:17px;width:64px">May</div>
<div class="a ar cb1" style="left:428px;top:17px;width:64px">Jun</div>
<div class="a ar cb1" style="left:492px;top:17px;width:64px">Jul</div>
<div class="a ar cb1" style="left:556px;top:17px;width:64px">Aug</div>
<div class="a ar cb1" style="left:620px;top:17px;width:64px">Sep</div>
<div class="a ar cb1" style="left:684px;top:17px;width:64px">Oct</div>
<div class="a ar cb1" style="left:44px;top:34px;width:63px">1990</div>
<div class="a" style="left:108px;top:34px;width:639px;height:17px;background:#ffffff"></div>
<div class="a ar cn" style="left:107px;top:34px;width:62px">127.4</div>
<div class="a ar cn" style="left:171px;top:34px;width:62px">128</div>
<div class="a ar cn" style="left:235px;top:34px;width:62px">128.7</div>
<div class="a ar cn" style="left:299px;top:34px;width:62px">128.9</div>
<div class="a ar cn" style="left:363px;top:34px;width:62px">129.2</div>
<div class="a ar cn" style="left:427px;top:34px;width:62px">129.9</div>
<div class="a ar cn" style="left:491px;top:34px;width:62px">130.4</div>
<div class="a ar cn" style="left:555px;top:34px;width:62px">131.6</div>
<div class="a ar cn" style="left:619px;top:34px;width:62px">132.7</div>
<div class="a ar cn" style="left:683px;top:34px;width:62px">133.5</div>
<div class="a ar cb1" style="left:44px;top:51px;width:63px">1991</div>
<div class="a" style="left:108px;top:51px;width:639px;height:17px;background:#e3e3e3"></div>
<div class="a ar cn" style="left:107px;top:51px;width:62px">134.6</div>
<div class="a ar cn" style="left:171px;top:51px;width:62px">134.8</div>
<div class="a ar cn" style="left:235px;top:51px;width:62px">135</div>
<div class="a ar cn" style="left:299px;top:51px;width:62px">135.2</div>
<div class="a ar cn" style="left:363px;top:51px;width:62px">135.6</div>
<div class="a ar cn" style="left:427px;top:51px;width:62px">136</div>
<div class="a ar cn" style="left:491px;top:51px;width:62px">136.2</div>
<div class="a ar cn" style="left:555px;top:51px;width:62px">136.6</div>
<div class="a ar cn" style="left:619px;top:51px;width:62px">137.2</div>
<div class="a ar cn" style="left:683px;top:51px;width:62px">137.4</div>
<div class="a ar cb1" style="left:44px;top:68px;width:63px">1992</div>
<div class="a" style="left:108px;top:68px;width:639px;height:17px;background:#e3e3e3"></div>
<div class="a ar cn" style="left:107px;top:68px;width:62px">138.1</div>
<div class="a ar cn" style="left:171px;top:68px;width:62px">138.6</div>
<div class="a ar cn" style="left:235px;top:68px;width:62px">139.3</div>
<div class="a ar cn" style="left:299px;top:68px;width:62px">139.5</div>
<div class="a ar cn" style="left:363px;top:68px;width:62px">139.7</div>
<div class="a ar cn" style="left:427px;top:68px;width:62px">140.2</div>
<div class="a ar cn" style="left:491px;top:68px;width:62px">140.5</div>
<div class="a ar cn" style="left:555px;top:68px;width:62px">140.9</div>
<div class="a ar cn" style="left:619px;top:68px;width:62px">141.3</div>
<div class="a ar cn" style="left:683px;top:68px;width:62px">141.8</div>
<div class="a ar cb1" style="left:44px;top:85px;width:63px">1993</div>
<div class="a" style="left:108px;top:85px;width:639px;height:17px;background:#e3e3e3"></div>
<div class="a ar cn" style="left:107px;top:85px;width:62px">142.6</div>
<div class="a ar cn" style="left:171px;top:85px;width:62px">143.1</div>
<div class="a ar cn" style="left:235px;top:85px;width:62px">143.6</div>
<div class="a ar cn" style="left:299px;top:85px;width:62px">144</div>
<div class="a ar cn" style="left:363px;top:85px;width:62px">144.2</div>
<div class="a ar cn" style="left:427px;top:85px;width:62px">144.4</div>
<div class="a ar cn" style="left:491px;top:85px;width:62px">144.4</div>
<div class="a ar cn" style="left:555px;top:85px;width:62px">144.8</div>
<div class="a ar cn" style="left:619px;top:85px;width:62px">145.1</div>
<div class="a ar cn" style="left:683px;top:85px;width:62px">145.7</div>
<div class="a ar cb1" style="left:44px;top:102px;width:63px">1994</div>
<div class="a" style="left:108px;top:102px;width:192px;height:17px;background:#e3e3e3"></div>
<div class="a" style="left:300px;top:102px;width:447px;height:17px;background:#c0c0c0"></div>
<div class="a ar cn" style="left:107px;top:102px;width:62px">146.2</div>
<div class="a ar cn" style="left:171px;top:102px;width:62px">146.7</div>
<div class="a ar cn" style="left:235px;top:102px;width:62px">147.2</div>
<div class="a ar cn" style="left:299px;top:102px;width:62px">147.4</div>
<div class="a ar cn" style="left:363px;top:102px;width:62px">147.5</div>
<div class="a ar cn" style="left:427px;top:102px;width:62px">148</div>
<div class="a ar cn" style="left:491px;top:102px;width:62px">148.4</div>
<div class="a ar cn" style="left:555px;top:102px;width:62px">149</div>
<div class="a ar cn" style="left:619px;top:102px;width:62px">149.4</div>
<div class="a ar cn" style="left:683px;top:102px;width:62px">149.9</div>
<div class="a ar cb1" style="left:44px;top:119px;width:63px">1995</div>
<div class="a" style="left:108px;top:119px;width:639px;height:17px;background:#c0c0c0"></div>
<div class="a ar cn" style="left:107px;top:119px;width:62px">150.3</div>
<div class="a ar cn" style="left:171px;top:119px;width:62px">150.9</div>
<div class="a ar cn" style="left:235px;top:119px;width:62px">151.4</div>
<div class="a ar cn" style="left:299px;top:119px;width:62px">151.9</div>
<div class="a ar cn" style="left:363px;top:119px;width:62px">152.2</div>
<div class="a ar cn" style="left:427px;top:119px;width:62px">152.5</div>
<div class="a ar cn" style="left:491px;top:119px;width:62px">152.5</div>
<div class="a ar cn" style="left:555px;top:119px;width:62px">152.9</div>
<div class="a ar cn" style="left:619px;top:119px;width:62px">153.2</div>
<div class="a ar cn" style="left:683px;top:119px;width:62px">153.7</div>
<div class="a ar cb1" style="left:44px;top:136px;width:63px">1996</div>
<div class="a" style="left:108px;top:136px;width:639px;height:17px;background:#c0c0c0"></div>
<div class="a ar cn" style="left:107px;top:136px;width:62px">154.4</div>
<div class="a ar cn" style="left:171px;top:136px;width:62px">154.9</div>
<div class="a ar cn" style="left:235px;top:136px;width:62px">155.7</div>
<div class="a ar cn" style="left:299px;top:136px;width:62px">156.3</div>
<div class="a ar cn" style="left:363px;top:136px;width:62px">156.6</div>
<div class="a ar cn" style="left:427px;top:136px;width:62px">156.7</div>
<div class="a ar cn" style="left:491px;top:136px;width:62px">157</div>
<div class="a ar cn" style="left:555px;top:136px;width:62px">157.3</div>
<div class="a ar cn" style="left:619px;top:136px;width:62px">157.8</div>
<div class="a ar cn" style="left:683px;top:136px;width:62px">158.3</div>
<div class="a ar cb1" style="left:44px;top:153px;width:63px">1997</div>
<div class="a" style="left:108px;top:153px;width:639px;height:17px;background:#c0c0c0"></div>
<div class="a ar cn" style="left:107px;top:153px;width:62px">159.1</div>
<div class="a ar cn" style="left:171px;top:153px;width:62px">159.6</div>
<div class="a ar cn" style="left:235px;top:153px;width:62px">160</div>
<div class="a ar cn" style="left:299px;top:153px;width:62px">160.2</div>
<div class="a ar cn" style="left:363px;top:153px;width:62px">160.1</div>
<div class="a ar cn" style="left:427px;top:153px;width:62px">160.3</div>
<div class="a ar cn" style="left:491px;top:153px;width:62px">160.5</div>
<div class="a ar cn" style="left:555px;top:153px;width:62px">160.8</div>
<div class="a ar cn" style="left:619px;top:153px;width:62px">161.2</div>
<div class="a ar cn" style="left:683px;top:153px;width:62px">161.6</div>
<div class="a ar cb1" style="left:44px;top:170px;width:63px">1998</div>
<div class="a" style="left:108px;top:170px;width:639px;height:17px;background:#c0c0c0"></div>
<div class="a ar cn" style="left:107px;top:170px;width:62px">161.6</div>
<div class="a ar cn" style="left:171px;top:170px;width:62px">161.9</div>
<div class="a ar cn" style="left:235px;top:170px;width:62px">162.2</div>
<div class="a ar cn" style="left:299px;top:170px;width:62px">162.5</div>
<div class="a ar cn" style="left:363px;top:170px;width:62px">162.8</div>
<div class="a ar cn" style="left:427px;top:170px;width:62px">163</div>
<div class="a ar cn" style="left:491px;top:170px;width:62px">163.2</div>
<div class="a ar cn" style="left:555px;top:170px;width:62px">163.4</div>
<div class="a ar cn" style="left:619px;top:170px;width:62px">163.6</div>
<div class="a ar cn" style="left:683px;top:170px;width:62px">164</div>
<div class="a ar cb1" style="left:44px;top:187px;width:63px">1999</div>
<div class="a" style="left:108px;top:187px;width:639px;height:17px;background:#969696"></div>
<div class="a ar cn" style="left:107px;top:187px;width:62px">164.3</div>
<div class="a ar cn" style="left:171px;top:187px;width:62px">164.5</div>
<div class="a ar cn" style="left:235px;top:187px;width:62px">165</div>
<div class="a ar cn" style="left:299px;top:187px;width:62px">166.2</div>
<div class="a ar cn" style="left:363px;top:187px;width:62px">166.2</div>
<div class="a ar cn" style="left:427px;top:187px;width:62px">166.2</div>
<div class="a ar cn" style="left:491px;top:187px;width:62px">166.7</div>
<div class="a ar cn" style="left:555px;top:187px;width:62px">167.1</div>
<div class="a ar cn" style="left:619px;top:187px;width:62px">167.9</div>
<div class="a ar cn" style="left:683px;top:187px;width:62px">168.3</div>
<div class="a ar cb1" style="left:44px;top:204px;width:63px">2000</div>
<div class="a" style="left:108px;top:204px;width:639px;height:17px;background:#969696"></div>
<div class="a ar cn" style="left:107px;top:204px;width:62px">168.8</div>
<div class="a ar cn" style="left:171px;top:204px;width:62px">169.8</div>
<div class="a ar cn" style="left:235px;top:204px;width:62px">171.2</div>
<div class="a ar cn" style="left:299px;top:204px;width:62px">171.3</div>
<div class="a ar cn" style="left:363px;top:204px;width:62px">171.5</div>
<div class="a ar cn" style="left:427px;top:204px;width:62px">172.4</div>
<div class="a ar cn" style="left:491px;top:204px;width:62px">172.8</div>
<div class="a ar cn" style="left:555px;top:204px;width:62px">172.8</div>
<div class="a ar cn" style="left:619px;top:204px;width:62px">173.7</div>
<div class="a ar cn" style="left:683px;top:204px;width:62px">174</div>
<div class="a ar cb1" style="left:44px;top:221px;width:63px">2001</div>
<div class="a" style="left:108px;top:221px;width:256px;height:17px;background:#969696"></div>
<div class="a" style="left:364px;top:221px;width:383px;height:17px;background:#808080"></div>
<div class="a ar cn" style="left:107px;top:221px;width:62px">175.1</div>
<div class="a ar cn" style="left:171px;top:221px;width:62px">175.8</div>
<div class="a ar cn" style="left:235px;top:221px;width:62px">176.2</div>
<div class="a ar cn" style="left:299px;top:221px;width:62px">176.9</div>
<div class="a ar cn" style="left:363px;top:221px;width:62px">177.7</div>
<div class="a ar cn" style="left:427px;top:221px;width:62px">178</div>
<div class="a ar cn" style="left:491px;top:221px;width:62px">177.5</div>
<div class="a ar cn" style="left:555px;top:221px;width:62px">177.5</div>
<div class="a ar cn" style="left:619px;top:221px;width:62px">178.3</div>
<div class="a ar cn" style="left:683px;top:221px;width:62px">177.7</div>
<div class="a ar cb1" style="left:44px;top:238px;width:63px">2002</div>
<div class="a" style="left:108px;top:238px;width:639px;height:17px;background:#808080"></div>
<div class="a ar cn" style="left:107px;top:238px;width:62px">177.1</div>
<div class="a ar cn" style="left:171px;top:238px;width:62px">177.8</div>
<div class="a ar cn" style="left:235px;top:238px;width:62px">178.8</div>
<div class="a ar cn" style="left:299px;top:238px;width:62px">179.8</div>
<div class="a ar cn" style="left:363px;top:238px;width:62px">179.8</div>
<div class="a ar cn" style="left:427px;top:238px;width:62px">179.9</div>
<div class="a ar cn" style="left:491px;top:238px;width:62px">180.1</div>
<div class="a ar cn" style="left:555px;top:238px;width:62px">180.7</div>
<div class="a ar cn" style="left:619px;top:238px;width:62px">181</div>
<div class="a ar cn" style="left:683px;top:238px;width:62px">181.3</div>
<div class="a" style="left:107px;top:16px;width:1px;height:239px;background:#000"></div>
<div class="a" style="left:747px;top:16px;width:1px;height:239px;background:#000"></div>
<div class="a" style="left:43px;top:33px;width:704px;height:1px;background:#000"></div>
<div class="a" style="left:43px;top:254px;width:705px;height:1px;background:#000"></div>
<div class="a hd" style="left:0;top:0;width:44px;height:17px"></div>
<div class="a hd ar" style="left:44px;top:0;width:64px;height:17px">A</div>
<div class="a hd ar" style="left:108px;top:0;width:64px;height:17px">B</div>
<div class="a hd ar" style="left:172px;top:0;width:64px;height:17px">C</div>
<div class="a hd ar" style="left:236px;top:0;width:64px;height:17px">D</div>
<div class="a hd ar" style="left:300px;top:0;width:64px;height:17px">E</div>
<div class="a hd ar" style="left:364px;top:0;width:64px;height:17px">F</div>
<div class="a hd ar" style="left:428px;top:0;width:64px;height:17px">G</div>
<div class="a hd ar" style="left:492px;top:0;width:64px;height:17px">H</div>
<div class="a hd ar" style="left:556px;top:0;width:64px;height:17px">I</div>
<div class="a hd ar" style="left:620px;top:0;width:64px;height:17px">J</div>
<div class="a hd ar" style="left:684px;top:0;width:64px;height:17px">K</div>
<div class="a hd ar" style="left:748px;top:0;width:64px;height:17px">L</div>
<div class="a hd ar" style="left:812px;top:0;width:64px;height:17px">M</div>
<div class="a hd ar" style="left:876px;top:0;width:64px;height:17px">N</div>
<div class="a hd ar" style="left:940px;top:0;width:64px;height:17px">O</div>
<div class="a hd rh ar" style="left:0;top:17px;width:44px;height:17px">1</div>
<div class="a hd rh ar" style="left:0;top:34px;width:44px;height:17px">2</div>
<div class="a hd rh ar" style="left:0;top:51px;width:44px;height:17px">3</div>
<div class="a hd rh ar" style="left:0;top:68px;width:44px;height:17px">4</div>
<div class="a hd rh ar" style="left:0;top:85px;width:44px;height:17px">5</div>
<div class="a hd rh ar" style="left:0;top:102px;width:44px;height:17px">6</div>
<div class="a hd rh ar" style="left:0;top:119px;width:44px;height:17px">7</div>
<div class="a hd rh ar" style="left:0;top:136px;width:44px;height:17px">8</div>
<div class="a hd rh ar" style="left:0;top:153px;width:44px;height:17px">9</div>
<div class="a hd rh ar" style="left:0;top:170px;width:44px;height:17px">10</div>
<div class="a hd rh ar" style="left:0;top:187px;width:44px;height:17px">11</div>
<div class="a hd rh ar" style="left:0;top:204px;width:44px;height:17px">12</div>
<div class="a hd rh ar" style="left:0;top:221px;width:44px;height:17px">13</div>
<div class="a hd rh ar" style="left:0;top:238px;width:44px;height:17px">14</div>
<div class="a hd rh ar" style="left:0;top:255px;width:44px;height:17px">15</div>
<div class="a hd rh ar" style="left:0;top:272px;width:44px;height:17px">16</div>
<div class="a hd rh ar" style="left:0;top:289px;width:44px;height:17px">17</div>
<div class="a hd rh ar" style="left:0;top:306px;width:44px;height:17px">18</div>
<div class="a hd rh ar" style="left:0;top:323px;width:44px;height:17px">19</div>
<div class="a hd rh ar" style="left:0;top:340px;width:44px;height:17px">20</div>
<div class="a hd rh ar" style="left:0;top:357px;width:44px;height:17px">21</div>
<div class="a hd rh ar" style="left:0;top:374px;width:44px;height:17px">22</div>
<div class="a hd rh ar" style="left:0;top:391px;width:44px;height:17px">23</div>
<div class="a hd rh ar" style="left:0;top:408px;width:44px;height:17px">24</div>
<div class="a hd rh ar" style="left:0;top:425px;width:44px;height:17px">25</div>
<div class="a hd rh ar" style="left:0;top:442px;width:44px;height:17px">26</div>
<div class="a hd rh ar" style="left:0;top:459px;width:44px;height:17px">27</div>
<div class="a hd rh ar" style="left:0;top:476px;width:44px;height:17px">28</div>
<div class="a" style="left:682px;top:406px;width:67px;height:20px;box-sizing:border-box;border:3px solid #000"></div>
<div class="a" style="left:744px;top:421px;width:7px;height:7px;background:#fff"></div>
<div class="a" style="left:745px;top:422px;width:5px;height:5px;background:#000"></div>
</div>
<!-- popup.html -->
<div class="a" id="pshadow"></div>
<div class="a" style="left:744px;top:135px;width:1px;height:413px;background:#a39f91"></div>
<div class="a" id="popup">
<div class="a pstrip" style="top:2px;height:26px"></div>
<svg class="a" style="left:4px;top:6px" width="20" height="18" viewBox="0 0 20 18"><ellipse cx="10.6" cy="7.5" rx="6.2" ry="6.2" fill="#f6ee3a" stroke="#222" stroke-width="1.1" stroke-dasharray="1.6 .9"/><circle cx="7.3" cy="5.8" r="1.1" fill="#8a20a0"/><circle cx="10.3" cy="4.4" r="1.1" fill="#5a7ae0"/><circle cx="13.2" cy="6" r="1.1" fill="#e8e8e8"/><circle cx="12.3" cy="9.7" r="1.1" fill="#d82020"/><circle cx="9.3" cy="10.8" r="1.1" fill="#18c8c8"/><circle cx="10.2" cy="7.7" r="1.6" fill="#fdfdf0"/><rect x="0.5" y="9.5" width="6.5" height="7.5" fill="none"/><text x="0.8" y="16" font-family="Liberation Serif,serif" font-size="10" font-weight="bold" fill="#000">A</text></svg>
<div class="a ui pit" style="top:3px;letter-spacing:0.158px"><u>F</u>ont Colour...</div>
<div class="a phd" style="top:28px"></div>
<div class="a ui phdt" style="top:29px;letter-spacing:0.038px">Restore Palette to Multi-Colour</div>
<div class="a pstrip" style="top:49px;height:26px"></div>
<svg class="a" style="left:5px;top:54px" width="16" height="16" viewBox="0 0 16 16"><rect x="0" y="0" width="16" height="16" fill="#000"/><rect x="1" y="1" width="7" height="7" fill="#f00"/><rect x="8" y="1" width="7" height="7" fill="#ff0"/><rect x="1" y="8" width="7" height="7" fill="#0ff"/><rect x="8" y="8" width="7" height="7" fill="#0f0"/></svg>
<div class="a ui pit" style="top:50px;letter-spacing:-0.05px"><u>R</u>estore Colour Palette</div>
<div class="a phd" style="top:75px"></div>
<div class="a ui phdt" style="top:76px;letter-spacing:-0.004px">Value Intensity Colour Map - Single</div>
<div class="a pstrip" style="top:96px;height:26px"></div>
<svg class="a" style="left:5px;top:101px" width="16" height="16" viewBox="0 0 16 16"><rect x="0" y="0" width="16" height="16" rx="3.5" fill="#ececec"/><rect x=".5" y=".5" width="15" height="15" rx="3" fill="none" stroke="#f8f8f8"/><rect x="3" y="3" width="10" height="2" fill="#7a7a7a"/><rect x="3" y="6" width="10" height="7" fill="#4a4a4a"/><g fill="#f4f4f4"><rect x="4" y="7" width="2" height="2"/><rect x="7" y="7" width="2" height="2"/><rect x="10" y="7" width="2" height="2"/><rect x="4" y="10" width="2" height="2"/><rect x="7" y="10" width="2" height="2"/><rect x="10" y="10" width="2" height="2"/></g></svg>
<div class="a ui pit" style="top:97px;letter-spacing:-0.261px"><u>L</u>imited Gray Scale - Multi Palette</div>
<div class="a pstrip" style="top:122px;height:26px"></div>
<svg class="a" style="left:5px;top:127px" width="16" height="16" viewBox="0 0 16 16"><rect x="0" y="0" width="16" height="16" rx="3.5" fill="#ececec"/><rect x=".5" y=".5" width="15" height="15" rx="3" fill="none" stroke="#f8f8f8"/><rect x="3" y="3" width="10" height="2" fill="#7a7a7a"/><rect x="3" y="6" width="10" height="7" fill="#4a4a4a"/><g fill="#f4f4f4"><rect x="4" y="7" width="2" height="2"/><rect x="7" y="7" width="2" height="2"/><rect x="10" y="7" width="2" height="2"/><rect x="4" y="10" width="2" height="2"/><rect x="7" y="10" width="2" height="2"/><rect x="10" y="10" width="2" height="2"/></g></svg>
<div class="a ui pit" style="top:123px;letter-spacing:-0.197px">F<u>u</u>ll Gray  Scale - Multi Palette</div>
<div class="a pstrip" style="top:148px;height:26px"></div>
<svg class="a" style="left:5px;top:153px" width="16" height="16" viewBox="0 0 16 16"><defs><linearGradient id="gbl" x1="0" y1="0" x2="0" y2="1"><stop offset="0" stop-color="#5a8ff0"/><stop offset="1" stop-color="#2a5ccc"/></linearGradient></defs><rect x="0" y="0" width="16" height="16" rx="3.5" fill="url(#gbl)"/><rect x="3" y="3" width="10" height="2" fill="#fff"/><rect x="3" y="6" width="10" height="7" fill="#fff"/><g fill="#3568d8"><rect x="4" y="7" width="2" height="2"/><rect x="7" y="7" width="2" height="2"/><rect x="10" y="7" width="2" height="2"/><rect x="4" y="10" width="2" height="2"/><rect x="7" y="10" width="2" height="2"/><rect x="10" y="10" width="2" height="2"/></g></svg>
<div class="a ui pit" style="top:149px;letter-spacing:-0.242px"><u>B</u>lue Scale - Multi Palette</div>
<div class="a pstrip" style="top:174px;height:3px"></div>
<div class="a psep" style="top:175px"></div>
<div class="a pstrip" style="top:177px;height:26px"></div>
<svg class="a" style="left:5px;top:182px" width="16" height="16" viewBox="0 0 16 16"><rect x="0" y="0" width="16" height="16" rx="3.5" fill="#b8282c"/><rect x="0" y="0" width="16" height="8" rx="3.5" fill="#c83a3c"/><rect x="3" y="3" width="10" height="2" fill="#fff"/><rect x="3" y="6" width="10" height="7" fill="#fff"/><g fill="#b8282c"><rect x="4" y="7" width="2" height="2"/><rect x="7" y="7" width="2" height="2"/><rect x="10" y="7" width="2" height="2"/><rect x="4" y="10" width="2" height="2"/><rect x="7" y="10" width="2" height="2"/><rect x="10" y="10" width="2" height="2"/></g></svg>
<div class="a ui pit" style="top:178px;letter-spacing:-0.203px"><u>G</u>reen Scale - Single Palette</div>
<div class="a pstrip" style="top:203px;height:26px"></div>
<div class="a psel" style="top:203px"></div>
<svg class="a" style="left:5px;top:208px" width="16" height="16" viewBox="0 0 16 16"><rect x="0" y="0" width="16" height="16" rx="3.5" fill="#b8282c"/><rect x="0" y="0" width="16" height="8" rx="3.5" fill="#c83a3c"/><rect x="3" y="3" width="10" height="2" fill="#fff"/><rect x="3" y="6" width="10" height="7" fill="#fff"/><g fill="#b8282c"><rect x="4" y="7" width="2" height="2"/><rect x="7" y="7" width="2" height="2"/><rect x="10" y="7" width="2" height="2"/><rect x="4" y="10" width="2" height="2"/><rect x="7" y="10" width="2" height="2"/><rect x="10" y="10" width="2" height="2"/></g></svg>
<div class="a ui pit" style="top:204px;letter-spacing:-0.202px"><u>S</u>un Flower Scale - Single Palette</div>
<div class="a pstrip" style="top:229px;height:26px"></div>
<svg class="a" style="left:5px;top:234px" width="16" height="16" viewBox="0 0 16 16"><rect x="0" y="0" width="16" height="16" rx="3.5" fill="#b8282c"/><rect x="0" y="0" width="16" height="8" rx="3.5" fill="#c83a3c"/><rect x="3" y="3" width="10" height="2" fill="#fff"/><rect x="3" y="6" width="10" height="7" fill="#fff"/><g fill="#b8282c"><rect x="4" y="7" width="2" height="2"/><rect x="7" y="7" width="2" height="2"/><rect x="10" y="7" width="2" height="2"/><rect x="4" y="10" width="2" height="2"/><rect x="7" y="10" width="2" height="2"/><rect x="10" y="10" width="2" height="2"/></g></svg>
<div class="a ui pit" style="top:230px;letter-spacing:-0.192px"><u>C</u>hocolate Scale - Single Palette</div>
<div class="a pstrip" style="top:255px;height:26px"></div>
<svg class="a" style="left:5px;top:260px" width="16" height="16" viewBox="0 0 16 16"><rect x="0" y="0" width="16" height="16" rx="3.5" fill="#b8282c"/><rect x="0" y="0" width="16" height="8" rx="3.5" fill="#c83a3c"/><rect x="3" y="3" width="10" height="2" fill="#fff"/><rect x="3" y="6" width="10" height="7" fill="#fff"/><g fill="#b8282c"><rect x="4" y="7" width="2" height="2"/><rect x="7" y="7" width="2" height="2"/><rect x="10" y="7" width="2" height="2"/><rect x="4" y="10" width="2" height="2"/><rect x="7" y="10" width="2" height="2"/><rect x="10" y="10" width="2" height="2"/></g></svg>
<div class="a ui pit" style="top:256px;letter-spacing:-0.167px">Fu<u>n</u>ky Purple Scale - Single Palette</div>
<div class="a phd" style="top:281px"></div>
<div class="a ui phdt" style="top:282px;letter-spacing:0.008px">Value Intensity Colour Map - Bi-Polar</div>
<div class="a pstrip" style="top:302px;height:26px"></div>
<div class="a ar" style="left:3px;top:309px;width:20px;height:16px;font-size:16px;line-height:16px;font-weight:bold;text-align:center;color:#000;transform:scaleX(.84)">%</div>
<div class="a ui pit" style="top:303px;letter-spacing:-0.071px"><u>5</u>0% Average Split - Red / Blue</div>
<div class="a pstrip" style="top:328px;height:26px"></div>
<div class="a ar" style="left:3px;top:335px;width:20px;height:16px;font-size:16px;line-height:16px;font-weight:bold;text-align:center;color:#000;transform:scaleX(.84)">%</div>
<div class="a ui pit" style="top:329px;letter-spacing:-0.048px">5<u>0</u>% Average Split - Red / Green</div>
<div class="a pstrip" style="top:354px;height:3px"></div>
<div class="a psep" style="top:355px"></div>
<div class="a pstrip" style="top:357px;height:26px"></div>
<div class="a ar" style="left:1px;top:362px;width:24px;height:16px;font-size:11px;line-height:16px;text-align:center;color:#000;transform:scaleX(.8)">0,00</div>
<div class="a ui pit" style="top:358px;letter-spacing:-0.199px">0 <u>V</u>alue Split - Red / Blue</div>
<div class="a pstrip" style="top:383px;height:26px"></div>
<div class="a ar" style="left:1px;top:388px;width:24px;height:16px;font-size:11px;line-height:16px;text-align:center;color:#000;transform:scaleX(.8)">0,00</div>
<div class="a ui pit" style="top:384px;letter-spacing:-0.156px">0 V<u>a</u>lue Split - Red / Green</div>
</div>
<!-- bottom.html -->
<!-- vertical scrollbar -->
<div class="a" style="left:1009px;top:164px;width:16px;height:485px;background:linear-gradient(90deg,#eeede5,#f8f7f2 40%,#fdfdfb)"></div>
<div class="a sbb" style="left:1010px;top:164px;width:15px;height:15px"><svg class="a" style="left:0;top:0" width="15" height="15" viewBox="0 0 15 15"><path d="M3.5 9.5L7.5 5.5L11.5 9.5" fill="none" stroke="#4d6185" stroke-width="2.3"/></svg></div>
<div class="a sbb" style="left:1010px;top:180px;width:15px;height:16px"><div class="a" style="left:3px;top:4px;width:7px;height:7px;background:repeating-linear-gradient(#eef4fe 0,#eef4fe 1px,#8cb0f8 1px,#8cb0f8 2px)"></div></div>
<div class="a sbb" style="left:1010px;top:633px;width:15px;height:15px"><svg class="a" style="left:0;top:0" width="15" height="15" viewBox="0 0 15 15"><path d="M3.5 5.5L7.5 9.5L11.5 5.5" fill="none" stroke="#4d6185" stroke-width="2.3"/></svg></div>
<!-- sheet tab bar -->
<div class="a" style="left:5px;top:648px;width:1020px;height:16px;background:#f6f5ef"></div>
<div class="a" style="left:38px;top:648px;width:566px;height:16px;background:#c0c0c0"></div>
<div class="a" style="left:106px;top:648px;width:498px;height:1px;background:#000"></div>
<div class="a" style="left:603px;top:648px;width:4px;height:16px;background:linear-gradient(90deg,#000 0,#000 1px,#ececec 1px,#ececec 2px,#3c3c3c 2px,#3c3c3c 3.5px,#f6f5ef 3.5px)"></div>
<div class="a sbb" style="left:5px;top:649px;width:14px;height:14px"><svg class="a" style="left:0;top:0" width="14" height="14" viewBox="0 0 14 14"><path d="M8.5 3L4.5 7L8.5 11" fill="none" stroke="#4d6185" stroke-width="2.3"/></svg></div>
<div class="a sbb" style="left:22px;top:649px;width:15px;height:14px"><svg class="a" style="left:0;top:0" width="15" height="14" viewBox="0 0 15 14"><path d="M5.5 3L9.5 7L5.5 11" fill="none" stroke="#4d6185" stroke-width="2.3"/></svg></div>
<svg class="a" style="left:38px;top:648px" width="72" height="16" viewBox="0 0 72 16"><polygon points="1.5,0 9,15.5 62,15.5 69.5,0" fill="#fff"/><path d="M1.5 0L9 15.5H62L69.5 0" fill="none" stroke="#000" stroke-width="1"/></svg>
<div class="a ar" style="left:52px;top:648px;font-size:13px;line-height:15px">Sheet1</div>
<!-- h scrollbar -->
<div class="a sbb" style="left:607px;top:649px;width:16px;height:15px"><svg class="a" style="left:0;top:0" width="15" height="14" viewBox="0 0 15 14"><path d="M9 3L5 7L9 11" fill="none" stroke="#4d6185" stroke-width="2.3"/></svg></div>
<div class="a sbb" style="left:624px;top:649px;width:16px;height:15px"><div class="a" style="left:4px;top:4px;width:7px;height:6px;background:repeating-linear-gradient(90deg,#eef4fe 0,#eef4fe 1px,#8cb0f8 1px,#8cb0f8 2px)"></div></div>
<div class="a sbb" style="left:993px;top:649px;width:16px;height:15px"><svg class="a" style="left:0;top:0" width="15" height="14" viewBox="0 0 15 14"><path d="M6 3L10 7L6 11" fill="none" stroke="#4d6185" stroke-width="2.3"/></svg></div>
<div class="a" style="left:1010px;top:649px;width:15px;height:15px;background:#c0c0c0"></div>
<!-- status bar -->
<div class="a" style="left:5px;top:664px;width:1020px;height:22px;background:#ece9d8"></div>
<div class="a ui" style="left:24px;top:670px;white-space:pre;word-spacing:-0.21px">Row:  24   Col:  11</div>
<div class="a ui" style="left:222px;top:670px;white-space:pre;letter-spacing:-0.4px">NUM</div>
<div class="a ui" style="left:388px;top:670px;white-space:pre;letter-spacing:0.0px">INSERT</div>
<div class="a ui" style="left:470px;top:670px;white-space:pre;letter-spacing:-.23px">1 Document(s) Open</div>
<div class="a ui" style="left:616px;top:670px;white-space:pre;letter-spacing:-.25px">R: 4.498 mm   C: 16.951 mm</div>
<div class="a ui" style="left:809px;top:670px;white-space:pre;word-spacing:-0.12px">R: 0.177&quot;   C: 0.667&quot;</div>
<div class="a ui" style="left:948px;top:670px;white-space:pre;letter-spacing:-0.36px">K24</div>
<div class="a ss" style="left:133px"></div><div class="a ss" style="left:209px"></div><div class="a ss" style="left:253px"></div><div class="a ss" style="left:298px"></div><div class="a ss" style="left:363px"></div><div class="a ss" style="left:442px"></div><div class="a ss" style="left:593px"></div><div class="a ss" style="left:773px"></div><div class="a ss" style="left:943px"></div><div class="a ss" style="left:1023px"></div>

<div class="a" style="left:1025px;top:31px;width:1px;height:655px;background:#2c66ee"></div>

</div>
</body></html>
